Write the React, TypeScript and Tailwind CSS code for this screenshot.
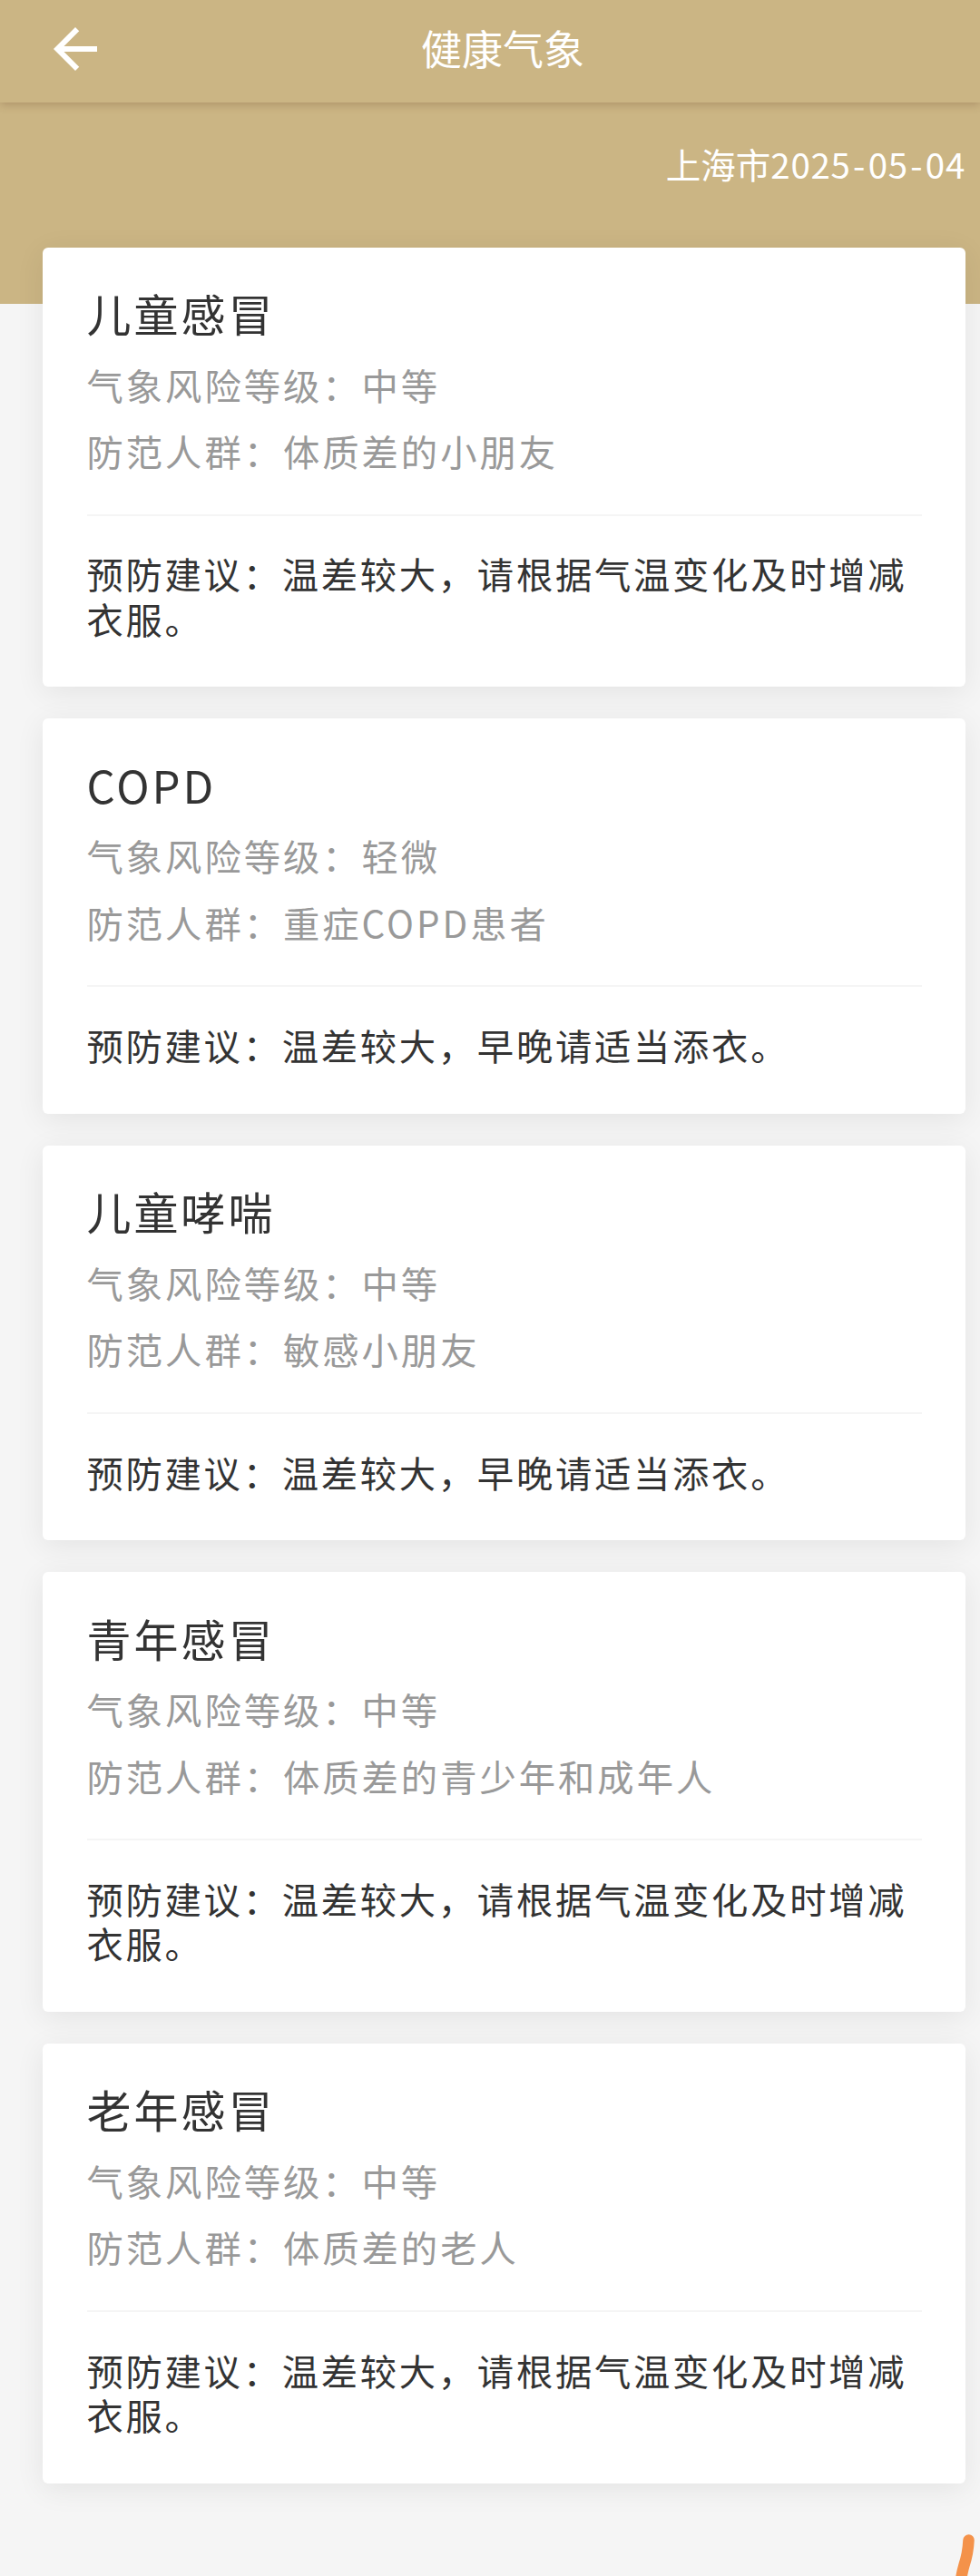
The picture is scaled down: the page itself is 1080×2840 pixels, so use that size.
import { MdArrowBack } from "react-icons/md";

interface Advice {
  name: string;
  level: string;
  crowd: string;
  tip: string;
}

const LIST: Advice[] = [
  { name: "儿童感冒", level: "中等", crowd: "体质差的小朋友", tip: "温差较大，请根据气温变化及时增减衣服。" },
  { name: "COPD", level: "轻微", crowd: "重症COPD患者", tip: "温差较大，早晚请适当添衣。" },
  { name: "儿童哮喘", level: "中等", crowd: "敏感小朋友", tip: "温差较大，早晚请适当添衣。" },
  { name: "青年感冒", level: "中等", crowd: "体质差的青少年和成年人", tip: "温差较大，请根据气温变化及时增减衣服。" },
  { name: "老年感冒", level: "中等", crowd: "体质差的老人", tip: "温差较大，请根据气温变化及时增减衣服。" },
];

function AdviceCard({ item }: { item: Advice }) {
  return (
    <div className="rounded-[6px] bg-white px-[48.5px] pt-[45.2px] pb-[51.2px] tracking-[3px] shadow-[0_6px_32px_rgba(0,0,0,0.075)]">
      <h2 className="h-[68.8px] text-[49px] leading-[54px] text-[#333]">{item.name}</h2>
      <p className="text-[40.3px] leading-[73.2px] text-[#999]">气象风险等级：{item.level}</p>
      <p className="text-[40.3px] leading-[73.2px] text-[#999]">防范人群：{item.crowd}</p>
      <div className="mt-[33.6px] mb-[38.7px] h-[2px] bg-[#f5f5f5]" />
      <p className="text-[40.3px] leading-[49.3px] tracking-[2.74px] text-[#333]">预防建议：{item.tip}</p>
    </div>
  );
}

export default function App() {
  return (
    <div
      lang="zh-CN"
      className="relative h-[2840px] w-[1080px] overflow-hidden bg-[#f5f5f5] font-['Noto_Sans_CJK_SC',sans-serif]"
    >
      <header className="relative z-10 grid h-[113px] grid-cols-[1fr_auto_1fr] items-start bg-[#cbb584] text-white shadow-[0_2px_10px_rgba(100,60,40,0.3)]">
        <MdArrowBack className="mt-[18px] ml-[47px] size-[72px]" />
        <h1 className="mt-[21px] ml-[28px] text-[45px] leading-[64px]">健康气象</h1>
      </header>

      {/* 城市和日期 */}
      <div className="flex h-[222px] justify-end bg-[#cbb584] pt-[40px] pr-[16px] text-[38.5px] leading-[54px] text-white">
        <span>上海市</span>
        <span className="tracking-[0.7px]">
          2025<span className="px-[2.5px]">-</span>05<span className="px-[2.5px]">-</span>04
        </span>
      </div>

      <main className="-mt-[62.3px] flex flex-col gap-[35.3px] pr-[16px] pl-[47px]">
        {LIST.map((item) => (
          <AdviceCard key={item.name} item={item} />
        ))}
      </main>

      {/* 右下角悬浮图标露出的一角 */}
      <svg className="absolute right-0 bottom-0 h-[50px] w-[40px]" viewBox="0 0 40 50" fill="none">
        <path d="M27.5 10.5C27 21 25.5 29 22.5 38C21 43 20 48 19 54" stroke="#f4924a" strokeWidth="12.5" strokeLinecap="round" />
      </svg>
    </div>
  );
}
